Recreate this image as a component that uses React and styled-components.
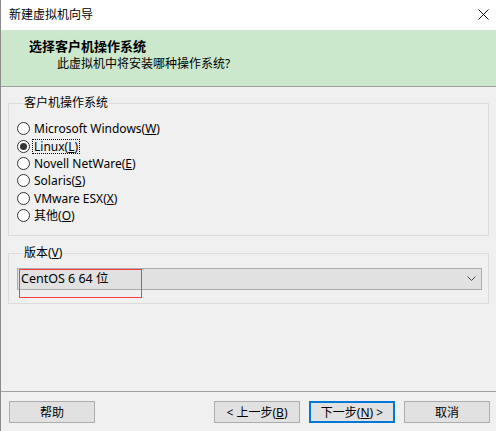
import React, { useState } from "react";
import styled, { createGlobalStyle } from "styled-components";

const GlobalStyle = createGlobalStyle`
  html, body {
    margin: 0;
    padding: 0;
    background: #f0f0f0;
  }
  * {
    box-sizing: border-box;
  }
`;

const FONT = `"Noto Sans", "Noto Sans CJK SC", sans-serif`;

const osList = [
  { label: "Microsoft Windows", key: "W" },
  { label: "Linux", key: "L" },
  { label: "Novell NetWare", key: "E" },
  { label: "Solaris", key: "S" },
  { label: "VMware ESX", key: "X" },
  { label: "其他", key: "O" },
];

const App = () => {
  const [os, setOs] = useState("Linux");

  return (
    <>
      <GlobalStyle />
      <Window>
        <TitleBar>
          <TitleText>新建虚拟机向导</TitleText>
          <CloseButton aria-label="关闭">
            <svg width="11" height="11" viewBox="0 0 11 11">
              <path d="M0.5 0.5 L10.5 10.5 M10.5 0.5 L0.5 10.5" stroke="#111" strokeWidth="1" fill="none" />
            </svg>
          </CloseButton>
        </TitleBar>

        <Header>
          <HeaderTitle>选择客户机操作系统</HeaderTitle>
          <HeaderSub>此虚拟机中将安装哪种操作系统?</HeaderSub>
        </Header>

        <Body>
          <Group>
            <Legend>客户机操作系统</Legend>
            <RadioList>
              {osList.map((item) => (
                <RadioRow key={item.key} onClick={() => setOs(item.label)}>
                  <RadioCircle $checked={os === item.label} />
                  <RadioLabel $focused={os === item.label}>
                    {item.label}(<u>{item.key}</u>)
                  </RadioLabel>
                </RadioRow>
              ))}
            </RadioList>
          </Group>

          <Group $pad="7px 6px 13px 8px">
            <Legend>
              版本(<u>V</u>)
            </Legend>
            <Select>
              <SelectText>CentOS 6 64 位</SelectText>
              <svg width="9" height="6" viewBox="0 0 9 6">
                <polyline points="0.5,0.5 4.5,4.5 8.5,0.5" stroke="#444" strokeWidth="1" fill="none" />
              </svg>
              <Highlight />
            </Select>
          </Group>
        </Body>

        <Footer>
          <Button>帮助</Button>
          <Spacer />
          <Button>&lt; 上一步(<u>B</u>)</Button>
          <Button $primary>
            下一步(<u>N</u>) &gt;
          </Button>
          <Button>取消</Button>
        </Footer>
      </Window>
    </>
  );
};

const Window = styled.div`
  width: 496px;
  height: 431px;
  display: flex;
  flex-direction: column;
  background: #f0f0f0;
  border-left: 1px solid #8c8c8c;
  font-family: ${FONT};
  font-size: 12px;
  color: #000;
  overflow: hidden;
`;

const TitleBar = styled.div`
  height: 30px;
  flex-shrink: 0;
  display: flex;
  align-items: center;
  justify-content: space-between;
  background: #fff;
  padding: 0 7px 0 8px;
`;

const TitleText = styled.span`
  font-size: 12px;
  line-height: 16px;
`;

const CloseButton = styled.button`
  border: none;
  background: transparent;
  padding: 0;
  width: 11px;
  height: 11px;
  display: flex;
  margin-bottom: 1px;
`;

const Header = styled.div`
  height: 57px;
  flex-shrink: 0;
  background: #cbe8cd;
  border-bottom: 1px solid #a0a0a0;
  padding: 8px 0 0 28px;
  display: flex;
  flex-direction: column;
`;

const HeaderTitle = styled.div`
  font-size: 13px;
  font-weight: 700;
  line-height: 17px;
`;

const HeaderSub = styled.div`
  font-size: 12px;
  line-height: 17px;
  padding-left: 28px;
`;

const Body = styled.div`
  flex: 1;
  padding: 8px 7px 0 7px;
  display: flex;
  flex-direction: column;
  gap: 9px;
`;

const Group = styled.fieldset`
  margin: 0;
  border: 1px solid #dcdcdc;
  padding: ${(p) => p.$pad || "9px 8px 11px 8px"};
  min-width: 0;
`;

const Legend = styled.legend`
  padding: 0 1px;
  margin-left: 6px;
  font-size: 12px;
  line-height: 16px;
  color: #000;
`;

const RadioList = styled.div`
  display: flex;
  flex-direction: column;
`;

const RadioRow = styled.div`
  height: 17.4px;
  display: flex;
  align-items: center;
  gap: 2px;
  cursor: default;
`;

const RadioCircle = styled.span`
  width: 13px;
  height: 13px;
  border-radius: 50%;
  border: 1px solid #333;
  background: #fff;
  display: flex;
  align-items: center;
  justify-content: center;
  flex-shrink: 0;

  &::after {
    content: "";
    width: 7px;
    height: 7px;
    border-radius: 50%;
    background: ${(p) => (p.$checked ? "#333" : "transparent")};
  }
`;

const RadioLabel = styled.span`
  line-height: 13px;
  padding: 0 1px;
  border: 1px dotted ${(p) => (p.$focused ? "#000" : "transparent")};
  white-space: nowrap;
`;

const Select = styled.div`
  position: relative;
  height: 22px;
  display: flex;
  align-items: center;
  justify-content: space-between;
  background: #e1e1e1;
  border: 1px solid #adadad;
  padding: 0 5px 0 3px;
`;

const SelectText = styled.span`
  font-size: 12.5px;
  line-height: 16px;
`;

/* red annotation box drawn over the dropdown */
const Highlight = styled.span`
  position: absolute;
  left: 1px;
  top: 0;
  width: 123px;
  height: 29px;
  border: 1px solid rgb(255, 60, 60);
  pointer-events: none;
`;

const Footer = styled.div`
  height: 40px;
  flex-shrink: 0;
  border-top: 1px solid #a0a0a0;
  display: flex;
  align-items: flex-start;
  gap: 9px;
  padding: 9px 6px 0 8px;
`;

const Spacer = styled.div`
  flex: 1;
`;

const Button = styled.button`
  width: 86px;
  height: 22px;
  padding: 0;
  font-family: ${FONT};
  font-size: 12px;
  color: #000;
  background: #e1e1e1;
  border: ${(p) => (p.$primary ? "2px solid #0078d7" : "1px solid #adadad")};
  display: flex;
  align-items: center;
  justify-content: center;
`;

export default App;
